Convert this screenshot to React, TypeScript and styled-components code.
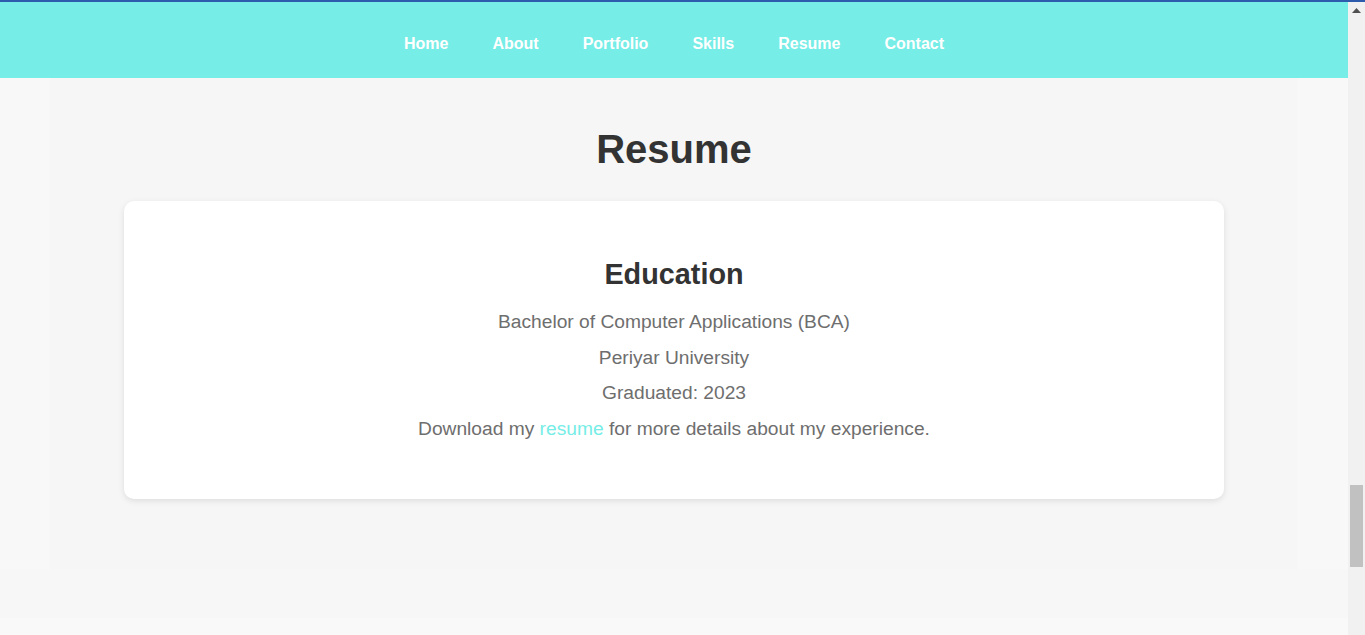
import React from "react";
import styled, { createGlobalStyle } from "styled-components";

const GlobalStyle = createGlobalStyle`
  html, body {
    margin: 0;
    padding: 0;
    height: 100%;
    overflow: hidden;
    background: #f9f9f9;
    font-family: "Liberation Sans", Arial, sans-serif;
  }
  #root { height: 100%; }
`;

const Frame = styled.div`
  height: 635px;
  display: flex;
  flex-direction: column;
  border-top: 2px solid #2c5cab;
  box-sizing: border-box;
`;

const Viewport = styled.div`
  flex: 1;
  display: flex;
  min-height: 0;
`;

const Page = styled.div`
  flex: 1;
  display: flex;
  flex-direction: column;
  background: #f8f8f8;
  overflow: hidden;
`;

const NavBar = styled.nav`
  height: 76px;
  flex-shrink: 0;
  background: #76ede6;
  display: flex;
  justify-content: center;
  align-items: center;
  gap: 44px;
`;

const NavLink = styled.a`
  color: #ffffff;
  font-weight: 700;
  font-size: 16px;
  text-decoration: none;
  padding-top: 8px;
`;

const Section = styled.section`
  margin: 0 50px;
  background: #f6f6f6;
  padding: 49px 0 70px;
  display: flex;
  flex-direction: column;
  align-items: center;
`;

const Title = styled.h2`
  margin: 0 0 29px;
  font-size: 40px;
  font-weight: 700;
  color: #333333;
`;

const Card = styled.div`
  width: 1100px;
  box-sizing: border-box;
  background: #ffffff;
  border-radius: 10px;
  box-shadow: 0 2px 6px rgba(0, 0, 0, 0.1);
  padding: 57px 40px 49px;
  text-align: center;
`;

const CardHeading = styled.h3`
  margin: 0 0 17px;
  font-size: 28.8px;
  font-weight: 700;
  color: #333333;
`;

const Line = styled.p`
  margin: 8px 0;
  font-size: 19.2px;
  line-height: 27.5px;
  color: #6e6e6e;
`;

const ResumeLink = styled.a`
  color: #76ede6;
  text-decoration: none;
`;

const Footer = styled.div`
  height: 49px;
  background: #f7f7f7;
  flex-shrink: 0;
`;

const Rest = styled.div`
  flex: 1;
  background: #f9f9f9;
`;

const ScrollTrack = styled.div`
  width: 17px;
  background: #f1f1f1;
  display: flex;
  flex-direction: column;
  align-items: center;
`;

const ArrowButton = styled.div`
  height: 17px;
  width: 17px;
  display: flex;
  justify-content: center;
  align-items: center;
`;

const ThumbArea = styled.div`
  flex: 1;
  width: 100%;
  display: flex;
  flex-direction: column;
  align-items: center;
  padding-top: 466px;
  box-sizing: border-box;
`;

const Thumb = styled.div`
  width: 13px;
  height: 82px;
  background: #c1c1c1;
`;

const navItems = ["Home", "About", "Portfolio", "Skills", "Resume", "Contact"];

export default function App() {
  return (
    <>
      <GlobalStyle />
      <Frame>
        <Viewport>
          <Page>
            <NavBar>
              {navItems.map((n) => (
                <NavLink key={n} href={`#${n.toLowerCase()}`}>
                  {n}
                </NavLink>
              ))}
            </NavBar>
            <Section>
              <Title>Resume</Title>
              <Card>
                <CardHeading>Education</CardHeading>
                <Line>Bachelor of Computer Applications (BCA)</Line>
                <Line>Periyar University</Line>
                <Line>Graduated: 2023</Line>
                <Line>
                  Download my <ResumeLink href="#">resume</ResumeLink> for more
                  details about my experience.
                </Line>
              </Card>
            </Section>
            <Footer />
            <Rest />
          </Page>
          <ScrollTrack>
            <ArrowButton>
              <svg width="9" height="5" viewBox="0 0 9 5">
                <path d="M4.5 0 L9 5 L0 5 Z" fill="#505050" />
              </svg>
            </ArrowButton>
            <ThumbArea>
              <Thumb />
            </ThumbArea>
          </ScrollTrack>
        </Viewport>
      </Frame>
    </>
  );
}
